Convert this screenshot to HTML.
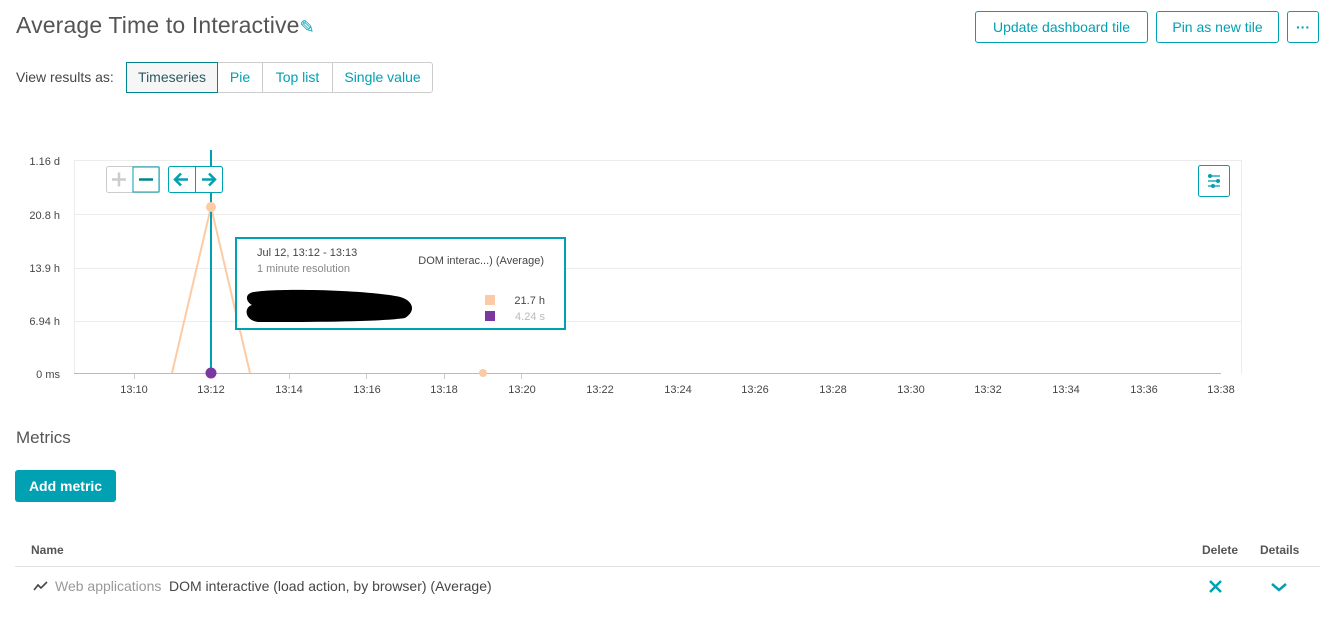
<!DOCTYPE html>
<html><head><meta charset="utf-8"><style>
body{margin:0;width:1329px;height:619px;background:#fff;font-family:"Liberation Sans",sans-serif;color:#454646;position:relative;overflow:hidden}
.a{position:absolute}
.btn{position:absolute;border:1px solid #00a1b2;border-radius:3px;color:#00a1b2;font-size:14px;text-align:center;box-sizing:border-box}
.seg{position:absolute;top:62px;height:31px;border:1px solid #ccc;box-sizing:border-box;color:#00a1b2;font-size:14px;line-height:29px;text-align:center}
</style></head><body>
<div class="a" style="left:16px;top:12px;font-size:23px;color:#555;letter-spacing:0.15px">Average Time to Interactive<span style="color:#00a1b2;font-size:18px">✎</span></div>
<div class="btn" style="left:975px;top:11px;width:173px;height:32px;line-height:30px">Update dashboard tile</div>
<div class="btn" style="left:1156px;top:11px;width:123px;height:32px;line-height:30px">Pin as new tile</div>
<div class="btn" style="left:1287px;top:11px;width:32px;height:32px;line-height:30px;font-weight:bold">···</div>
<div class="a" style="left:16px;top:69px;font-size:14px">View results as:</div>
<div class="seg" style="left:126px;width:92px;border-color:#00848e;background:#f6f6f6;color:#2a5a60;z-index:1">Timeseries</div>
<div class="seg" style="left:217px;width:46px">Pie</div>
<div class="seg" style="left:262px;width:71px">Top list</div>
<div class="seg" style="left:332px;width:101px;border-radius:0 3px 3px 0">Single value</div>

<svg class="a" style="left:0;top:0" width="1329" height="420">
<g stroke="#ececec" stroke-width="1">
<line x1="74" y1="160.5" x2="1241" y2="160.5"/><line x1="74" y1="214.5" x2="1241" y2="214.5"/>
<line x1="74" y1="268.5" x2="1241" y2="268.5"/><line x1="74" y1="321.5" x2="1241" y2="321.5"/>
<line x1="1241.5" y1="160" x2="1241.5" y2="374"/><line x1="74.5" y1="160" x2="74.5" y2="374"/>
</g>
<g font-size="11" fill="#454646" text-anchor="end">
<text x="60" y="165">1.16 d</text><text x="60" y="219">20.8 h</text><text x="60" y="272">13.9 h</text><text x="60" y="325">6.94 h</text><text x="60" y="378">0 ms</text>
</g>
<line x1="74" y1="373.5" x2="1221" y2="373.5" stroke="#9a7eb0" stroke-width="1" opacity=".6"/>
<polyline points="172,373 211,207 250,373" fill="none" stroke="#fccba5" stroke-width="2"/>
<line x1="211" y1="150" x2="211" y2="373" stroke="#00a1b2" stroke-width="2"/>
<circle cx="211" cy="207" r="5" fill="#fccba5"/>
<circle cx="211" cy="373" r="5.5" fill="#7c38a1"/>
<circle cx="483" cy="373" r="4" fill="#fccba5"/>
<g stroke="#c9c9d6"><line x1="134.5" y1="374" x2="134.5" y2="379"/><line x1="289.5" y1="374" x2="289.5" y2="379"/><line x1="366.5" y1="374" x2="366.5" y2="379"/><line x1="444.5" y1="374" x2="444.5" y2="379"/><line x1="521.5" y1="374" x2="521.5" y2="379"/></g>
<g font-size="11" fill="#454646" text-anchor="middle">
<text x="134" y="393">13:10</text><text x="211" y="393">13:12</text><text x="289" y="393">13:14</text><text x="367" y="393">13:16</text><text x="444" y="393">13:18</text><text x="522" y="393">13:20</text><text x="600" y="393">13:22</text><text x="678" y="393">13:24</text><text x="755" y="393">13:26</text><text x="833" y="393">13:28</text><text x="911" y="393">13:30</text><text x="988" y="393">13:32</text><text x="1066" y="393">13:34</text><text x="1144" y="393">13:36</text><text x="1221" y="393">13:38</text>
</g>
<rect x="106.5" y="166.5" width="53" height="26" rx="2" fill="#fff" stroke="#ccc"/>
<path d="M133 167 H159 V192 H133 Z" fill="#fff" stroke="#00a1b2"/>
<path d="M112 179.5H126M119 172.5V186.5" stroke="#ccc" stroke-width="2.5"/>
<path d="M139 179.5H153" stroke="#00848e" stroke-width="2.5"/>
<rect x="168.5" y="166.5" width="54" height="26" rx="2" fill="#fff" stroke="#00a1b2"/>
<line x1="195.5" y1="167" x2="195.5" y2="192" stroke="#00a1b2"/>
<path d="M188 179.5H175M181 173.5L175 179.5L181 185.5" fill="none" stroke="#00a1b2" stroke-width="2.5"/>
<path d="M202 179.5H215M209 173.5L215 179.5L209 185.5" fill="none" stroke="#00a1b2" stroke-width="2.5"/>
<rect x="1198.5" y="165.5" width="31" height="31" rx="2" fill="#fff" stroke="#00a1b2"/>
<g stroke="#00a1b2" stroke-width="1.3"><line x1="1208" y1="176" x2="1220" y2="176"/><line x1="1208" y1="181" x2="1220" y2="181"/><line x1="1208" y1="186" x2="1220" y2="186"/></g>
<g fill="#00a1b2"><circle cx="1210" cy="176" r="2"/><circle cx="1218" cy="181" r="2"/><circle cx="1213" cy="186" r="2"/></g>
<rect x="236" y="238" width="329" height="91" fill="#fff" stroke="#00a1b2" stroke-width="2"/>
<text x="257" y="256" font-size="11" fill="#454646">Jul 12, 13:12 - 13:13</text>
<text x="257" y="272" font-size="11" fill="#888">1 minute resolution</text>
<text x="544" y="264" font-size="11" fill="#454646" text-anchor="end">DOM interac...) (Average)</text>
<path d="M254 292 C280 288 360 290 395 296 C412 298 418 310 405 318 C380 322 300 322 258 322 C244 320 244 307 252 305 C244 300 246 293 254 292Z" fill="#000"/>
<rect x="485" y="295" width="10" height="10" fill="#fccba5"/>
<rect x="485" y="311" width="10" height="10" fill="#7c38a1"/>
<text x="545" y="304" font-size="11" fill="#454646" text-anchor="end">21.7 h</text>
<text x="545" y="320" font-size="11" fill="#bbb" text-anchor="end">4.24 s</text>
</svg>

<div class="a" style="left:16px;top:428px;font-size:17px;color:#555">Metrics</div>
<div class="a" style="left:15px;top:470px;width:101px;height:32px;background:#00a1b2;border-radius:3px;color:#fff;font-size:14px;font-weight:bold;line-height:32px;text-align:center">Add metric</div>
<div class="a" style="left:31px;top:543px;font-size:12px;font-weight:bold;color:#555">Name</div>
<div class="a" style="left:1202px;top:543px;font-size:12px;font-weight:bold;color:#555">Delete</div>
<div class="a" style="left:1260px;top:543px;font-size:12px;font-weight:bold;color:#555">Details</div>
<div class="a" style="left:15px;top:566px;width:1305px;height:1px;background:#e0e0e0"></div>
<svg class="a" style="left:33px;top:580px" width="16" height="12"><path d="M1 10L5 5L8 8L14 2" fill="none" stroke="#454646" stroke-width="1.6"/></svg>
<div class="a" style="left:55px;top:578px;font-size:14px;color:#999">Web applications</div>
<div class="a" style="left:169px;top:578px;font-size:14px;color:#454646">DOM interactive (load action, by browser) (Average)</div>
<svg class="a" style="left:1208px;top:580px" width="16" height="14"><path d="M2 1L13 12M13 1L2 12" stroke="#00a1b2" stroke-width="2.5"/></svg>
<svg class="a" style="left:1270px;top:582px" width="18" height="10"><path d="M2 2L9 8L16 2" fill="none" stroke="#00a1b2" stroke-width="2.5"/></svg>
</body></html>
